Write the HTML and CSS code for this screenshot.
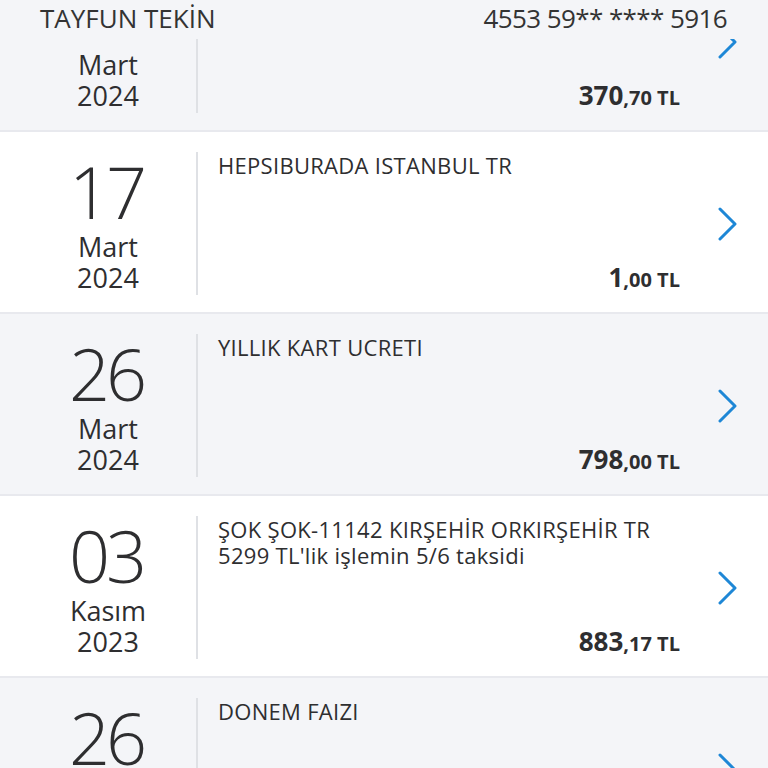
FILE: index.html
```html
<!DOCTYPE html>
<html lang="tr">
<head>
    <meta charset="UTF-8">
    <meta name="viewport" content="width=device-width, initial-scale=1.0">
    <title>Kart Hareketleri</title>
    <link rel="stylesheet" href="styles.css">
</head>
<body>
    <div class="card-bar">
        <span class="card-owner">TAYFUN TEKİN</span>
        <span class="card-number">4553 59** **** 5916</span>
    </div>

    <div class="tx-list">
        <!-- first row is scrolled half under the card bar -->
        <div class="tx-row tx-grey">
            <div class="tx-date">
                <div class="day">&nbsp;</div>
                <div class="month">Mart</div>
                <div class="year">2024</div>
            </div>
            <div class="tx-main">
                <div class="tx-desc">&nbsp;</div>
                <div class="tx-amount">370<small>,70 TL</small></div>
            </div>
            <div class="tx-arrow">
                <svg width="20" height="34" viewBox="0 0 20 34"><polyline points="2,2 17,17 2,32" /></svg>
            </div>
        </div>

        <div class="tx-row">
            <div class="tx-date">
                <div class="day">17</div>
                <div class="month">Mart</div>
                <div class="year">2024</div>
            </div>
            <div class="tx-main">
                <div class="tx-desc">HEPSIBURADA ISTANBUL TR</div>
                <div class="tx-amount">1<small>,00 TL</small></div>
            </div>
            <div class="tx-arrow">
                <svg width="20" height="34" viewBox="0 0 20 34"><polyline points="2,2 17,17 2,32" /></svg>
            </div>
        </div>

        <div class="tx-row tx-grey">
            <div class="tx-date">
                <div class="day">26</div>
                <div class="month">Mart</div>
                <div class="year">2024</div>
            </div>
            <div class="tx-main">
                <div class="tx-desc">YILLIK KART UCRETI</div>
                <div class="tx-amount">798<small>,00 TL</small></div>
            </div>
            <div class="tx-arrow">
                <svg width="20" height="34" viewBox="0 0 20 34"><polyline points="2,2 17,17 2,32" /></svg>
            </div>
        </div>

        <div class="tx-row">
            <div class="tx-date">
                <div class="day">03</div>
                <div class="month">Kasım</div>
                <div class="year">2023</div>
            </div>
            <div class="tx-main">
                <div class="tx-desc">ŞOK ŞOK-11142 KIRŞEHİR ORKIRŞEHİR TR<br>5299 TL'lik işlemin 5/6 taksidi</div>
                <div class="tx-amount">883<small>,17 TL</small></div>
            </div>
            <div class="tx-arrow">
                <svg width="20" height="34" viewBox="0 0 20 34"><polyline points="2,2 17,17 2,32" /></svg>
            </div>
        </div>

        <div class="tx-row tx-grey">
            <div class="tx-date">
                <div class="day">26</div>
            </div>
            <div class="tx-main">
                <div class="tx-desc">DONEM FAIZI</div>
            </div>
            <div class="tx-arrow">
                <svg width="20" height="34" viewBox="0 0 20 34"><polyline points="2,2 17,17 2,32" /></svg>
            </div>
        </div>
    </div>
</body>
</html>
```

FILE: styles.css
```css
body {
    margin: 0;
    background: #f4f5f8;
    font-family: "Open Sans", "Noto Sans", sans-serif;
    color: #2e2e30;
    overflow: hidden;
}
.card-bar {
    position: fixed;
    top: 0;
    left: 0;
    right: 0;
    height: 39px;
    z-index: 2;
    display: flex;
    justify-content: space-between;
    align-items: flex-start;
    padding: 0 41px 0 40px;
    background: #f4f5f8;
    font-size: 26px;
    line-height: 36px;
    color: #333;
}
.card-number {
    letter-spacing: -0.6px;
}
.tx-list {
    margin-top: -50px;
}
.tx-row {
    display: grid;
    grid-template-columns: 176px 1fr 88px;
    height: 182px;
    box-sizing: border-box;
    padding: 20px 0 17px 20px;
    background: #fff;
    border-bottom: 2px solid #e8e9ee;
}
.tx-grey {
    background: #f4f5f8;
}
.tx-date {
    display: flex;
    flex-direction: column;
    align-items: center;
    padding-top: 3px;
}
.day {
    font-size: 72px;
    font-weight: 300;
    line-height: 72px;
    letter-spacing: -4px;
    margin-left: -4px;
    margin-bottom: 4px;
}
.month,
.year {
    font-size: 27px;
    line-height: 31px;
}
.tx-main {
    display: flex;
    flex-direction: column;
    justify-content: space-between;
    border-left: 2px solid #dfe1e5;
    padding-left: 20px;
}
.tx-desc {
    font-size: 22px;
    line-height: 26px;
    letter-spacing: 0.3px;
}
.tx-amount {
    align-self: flex-end;
    font-size: 26px;
    font-weight: 700;
    line-height: 28px;
    margin-bottom: 1px;
}
.tx-amount small {
    font-size: 20px;
}
.tx-arrow {
    display: flex;
    align-items: center;
    padding-left: 38px;
}
.tx-arrow polyline {
    fill: none;
    stroke: #1e87d6;
    stroke-width: 3;
    stroke-linecap: round;
    stroke-linejoin: round;
}
```
